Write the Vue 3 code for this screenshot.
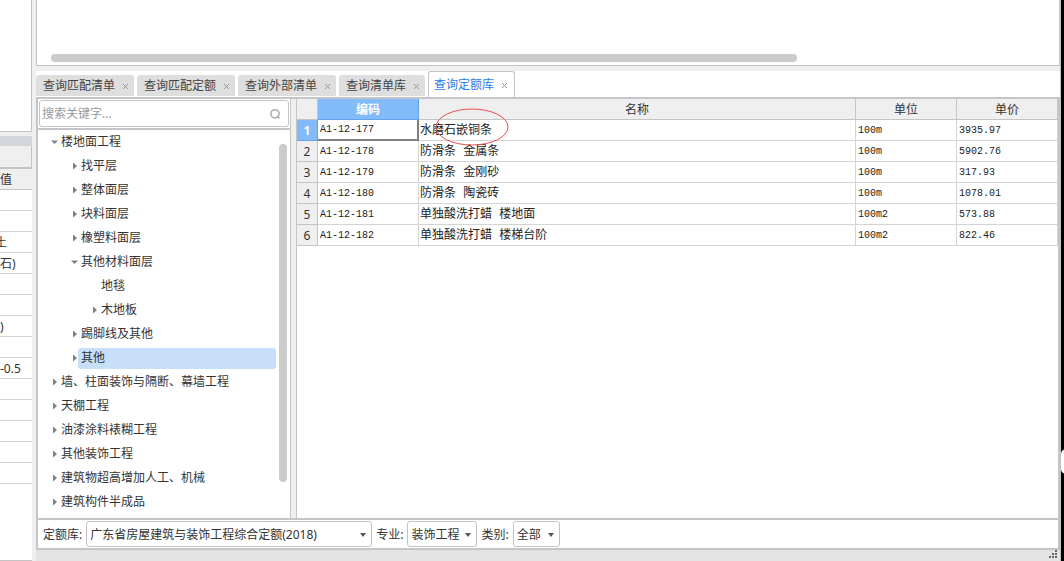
<script setup>
import { ref } from 'vue'

const tabs = ['查询匹配清单', '查询匹配定额', '查询外部清单', '查询清单库', '查询定额库']
const activeTab = ref(4)
const keyword = ref('')

const tree = [
  { name: '楼地面工程', level: 0, state: 'open' },
  { name: '找平层', level: 1, state: 'closed' },
  { name: '整体面层', level: 1, state: 'closed' },
  { name: '块料面层', level: 1, state: 'closed' },
  { name: '橡塑料面层', level: 1, state: 'closed' },
  { name: '其他材料面层', level: 1, state: 'open' },
  { name: '地毯', level: 2, state: 'leaf' },
  { name: '木地板', level: 2, state: 'closed' },
  { name: '踢脚线及其他', level: 1, state: 'closed' },
  { name: '其他', level: 1, state: 'closed' },
  { name: '墙、柱面装饰与隔断、幕墙工程', level: 0, state: 'closed' },
  { name: '天棚工程', level: 0, state: 'closed' },
  { name: '油漆涂料裱糊工程', level: 0, state: 'closed' },
  { name: '其他装饰工程', level: 0, state: 'closed' },
  { name: '建筑物超高增加人工、机械', level: 0, state: 'closed' },
  { name: '建筑构件半成品', level: 0, state: 'closed' }
]
const selectedNode = ref(9)

const rows = [
  ['A1-12-177', '水磨石嵌铜条', '100m', '3935.97'],
  ['A1-12-178', '防滑条 金属条', '100m', '5902.76'],
  ['A1-12-179', '防滑条 金刚砂', '100m', '317.93'],
  ['A1-12-180', '防滑条 陶瓷砖', '100m', '1078.01'],
  ['A1-12-181', '单独酸洗打蜡 楼地面', '100m2', '573.88'],
  ['A1-12-182', '单独酸洗打蜡 楼梯台阶', '100m2', '822.46']
]

const sideRows = ['', '', '土', '石)', '', '', ')', '', '-0.5', '', '', '', '', '']
</script>

<template>
  <div class="window">
    <aside class="side">
      <div class="side-top"></div>
      <div class="side-band"></div>
      <div class="side-bar"></div>
      <table class="side-table">
        <thead><tr><th>值</th></tr></thead>
        <tbody>
          <tr v-for="(text, i) in sideRows" :key="i">
            <td :class="{ cut: text === '土' }">{{ text }}</td>
          </tr>
        </tbody>
      </table>
    </aside>

    <main class="main">
      <section class="upper"><div class="h-thumb"></div></section>

      <nav class="tabs">
        <div v-for="(tab, i) in tabs" :key="tab" class="tab" :class="{ active: i === activeTab }">
          <button class="tab-name" type="button" @click="activeTab = i">{{ tab }}</button>
          <button class="tab-close" type="button" :aria-label="'关闭' + tab">
            <svg width="7" height="7" viewBox="0 0 7 7"><path d="M1 1l5 5M6 1l-5 5" /></svg>
          </button>
        </div>
      </nav>

      <div class="content">
        <section class="nav-pane">
          <div class="search-row">
            <div class="search">
              <input v-model="keyword" type="text" placeholder="搜索关键字..." aria-label="搜索关键字" />
              <svg width="12" height="12" viewBox="0 0 12 12"><circle cx="6" cy="5.8" r="4.1" /><path d="M7.8 8.2l2.8 2" /></svg>
            </div>
          </div>
          <div class="tree-wrap">
            <ul class="tree">
              <li v-for="(node, i) in tree" :key="i" :class="'level-' + node.level">
                <span class="arrow">
                  <svg v-if="node.state === 'closed'" width="8" height="8" viewBox="0 0 8 8"><path d="M3 0.5L7 4L3 7.5z" /></svg>
                  <svg v-else-if="node.state === 'open'" width="8" height="8" viewBox="0 0 8 8"><path d="M1 2.5h7L4.5 6z" /></svg>
                </span>
                <button type="button" class="node" :class="{ selected: i === selectedNode }" @click="selectedNode = i">{{ node.name }}</button>
              </li>
            </ul>
            <div class="v-track"><div class="v-thumb"></div></div>
          </div>
        </section>

        <section class="grid-pane">
          <table class="grid">
            <colgroup><col class="c-no" /><col class="c-fix" /><col /><col class="c-fix" /><col class="c-fix" /></colgroup>
            <thead>
              <tr><th></th><th class="on">编码</th><th>名称</th><th>单位</th><th>单价</th></tr>
            </thead>
            <tbody>
              <tr v-for="(row, i) in rows" :key="row[0]">
                <th scope="row" :class="{ on: i === 0 }">{{ i + 1 }}</th>
                <td :class="{ current: i === 0 }">{{ row[0] }}</td>
                <td>
                  {{ row[1] }}
                  <svg v-if="i === 0" class="mark" width="74" height="38" viewBox="0 0 74 38"><ellipse cx="37" cy="19" rx="36" ry="18" /></svg>
                </td>
                <td>{{ row[2] }}</td>
                <td>{{ row[3] }}</td>
              </tr>
            </tbody>
          </table>
        </section>
      </div>

      <footer class="filters">
        <label for="lib">定额库:</label>
        <div class="pick lib"><select id="lib"><option>广东省房屋建筑与装饰工程综合定额(2018)</option></select></div>
        <label for="major">专业:</label>
        <div class="pick major"><select id="major"><option>装饰工程</option></select></div>
        <label for="kind">类别:</label>
        <div class="pick kind"><select id="kind"><option>全部</option></select></div>
      </footer>

      <div class="status">
        <svg width="8" height="8" viewBox="0 0 8 8"><path d="M6 0h2v2H6zM3 3h2v2H3zM6 3h2v2H6zM0 6h2v2H0zM3 6h2v2H3zM6 6h2v2H6z" /></svg>
      </div>
    </main>

    <div class="edge"><span class="handle"></span></div>
  </div>
</template>

<style>
body { margin: 0; background: #efefef; }
</style>

<style scoped>
.window {
  display: grid;
  grid-template-columns: 32px minmax(0, 1fr) 3px;
  min-height: 100vh;
  box-sizing: border-box;
  overflow: hidden;
  background: #efefef;
  color: #333;
  font: 12px/20px "Noto Sans", "Noto Sans CJK SC", sans-serif;
}
button, input, select { font: inherit; color: inherit; border: 0; padding: 0; margin: 0; background: none; }

.side { display: flex; flex-direction: column; min-width: 0; overflow: hidden; background: #fff; border-bottom: 1px solid #c4c4c4; }
.side-top { height: 131px; border-right: 1px solid #c4c4c4; border-bottom: 1px solid #c4c4c4; }
.side-band { height: 10px; border-top: 4px solid #efefef; background: #d3d5da; }
.side-bar { height: 21px; background: #efefef; border-right: 1px solid #c4c4c4; border-bottom: 2px solid #c4c4c4; }
.side-table { width: 100%; border-collapse: separate; border-spacing: 0; }
.side-table th, .side-table td {
  box-sizing: border-box; height: 21px; padding: 2px 0 0; line-height: 18px; text-align: left; font-weight: 400;
  border-bottom: 1px solid #d4d4d4; white-space: nowrap;
}
.side-table th { background: #efefef; border-color: #c4c4c4; }
.side-table .cut { text-indent: -5px; }

.main { display: flex; flex-direction: column; min-width: 0; padding-left: 4px; border-right: 1px solid #c4c4c4; }
.upper { display: flex; align-items: flex-end; height: 65px; background: #fff; border: 1px solid #c4c4c4; border-top: 0; }
.h-thumb { width: 73%; height: 8px; margin: 0 0 3px 14px; border-radius: 4px; background: #cbcbcb; }

.tabs { display: flex; align-items: flex-end; gap: 3px; height: 26px; margin-top: 5px; background: #fff; }
.tab { display: flex; align-items: center; gap: 7px; height: 21px; margin-bottom: 1px; padding: 0 5px 0 7px; border-radius: 3px 3px 0 0; background: #dedede; color: #444; }
.tab-name, .tab-close { cursor: pointer; white-space: nowrap; line-height: 20px; }
.tab-close { display: flex; padding-top: 2px; }
.tab-close path { stroke: #999; fill: none; }
.tab.active { height: 25px; margin-bottom: 0; padding: 0 6px 0 5px; border: 1px solid #c4c4c4; border-bottom: 0; background: #fff; color: #2a7ee6; }

.content { display: flex; flex: 1; min-height: 0; border: 2px solid #c4c5c9; }
.nav-pane { display: flex; flex-direction: column; width: 252px; background: #fff; border-right: 1px solid #c4c4c4; }
.search-row { padding: 1px; border-bottom: 2px solid #c4c5c9; }
.search { display: flex; align-items: center; height: 25px; padding: 0 7px 0 2px; border: 1px solid #c4c4c4; border-radius: 3px; }
.search input { flex: 1; min-width: 0; height: 20px; outline: 0; }
.search input::placeholder { color: #999; opacity: 1; }
.search svg { fill: none; stroke: #aaa; stroke-width: 1.5; }
.tree-wrap { display: flex; flex: 1; }
.tree { flex: 1; margin: 0; padding: 0; list-style: none; }
.tree li { display: flex; align-items: center; height: 24px; }
.level-0 { padding-left: 12px; }
.level-1 { padding-left: 32px; }
.level-2 { padding-left: 52px; }
.arrow { display: flex; width: 8px; }
.arrow path { fill: #808080; }
.node { flex: 1; height: 21px; padding-left: 3px; border-radius: 3px; text-align: left; line-height: 20px; white-space: nowrap; }
.node.selected { background: #c8dffa; }
.v-track { display: flex; width: 11px; margin: 14px 3px 36px 0; justify-content: flex-end; }
.v-thumb { width: 8px; border-radius: 4px; background: #cbcbcb; }

.grid-pane { flex: 1; min-width: 0; margin-left: 5px; background: #fff; border-left: 1px solid #c4c4c4; }
.grid { width: 100%; table-layout: fixed; border-collapse: separate; border-spacing: 0; }
.c-no { width: 21px; }
.c-fix { width: 101px; }
.grid th, .grid td { box-sizing: border-box; height: 21px; padding: 2px 0 0; line-height: 18px; border-right: 1px solid #d4d4d4; border-bottom: 1px solid #d4d4d4; white-space: nowrap; }
.grid th { background: #efefef; border-color: #c4c4c4; font-weight: 400; }
.grid th.on { background: #82bafa; border-color: #62a3ec; color: #fff; font-weight: 700; }
.grid td { position: relative; padding-left: 2px; text-align: left; color: #222; font-family: "Liberation Mono", "Noto Sans CJK SC", monospace; font-size: 10px; }
.grid td:nth-child(3) { padding-left: 1px; font-size: 12px; }
.grid td.current { padding-top: 1px; border-right: 2px solid #808080; border-bottom: 2px solid #808080; }
.mark { position: absolute; left: 16px; top: -12px; z-index: 1; fill: none; stroke: #e85050; }

.filters { display: flex; align-items: center; gap: 4px; height: 28px; padding-left: 5px; background: #fff; border: 2px solid #c4c5c9; border-top: 0; }
.filters label { padding-top: 2px; }
.pick { position: relative; box-sizing: border-box; height: 26px; border: 1px solid #c4c4c4; border-radius: 3px; }
.pick select { width: 100%; height: 24px; padding: 1px 0 0 3px; appearance: none; outline: 0; }
.pick::after { content: ""; position: absolute; right: 5px; top: 11px; border: 3px solid transparent; border-top: 4px solid #555; border-bottom: 0; pointer-events: none; }
.lib { width: 286px; }
.major { width: 70px; }
.kind { width: 47px; }

.status { display: flex; justify-content: flex-end; height: 11px; padding-right: 3px; background: #e3e3e3; }
.status path { fill: #666b76; }

.edge { display: flex; align-items: flex-end; background: #000; overflow: hidden; }
.handle { width: 12px; height: 25px; margin-bottom: 87px; flex: none; border-radius: 5px; background: #fff; }
</style>
